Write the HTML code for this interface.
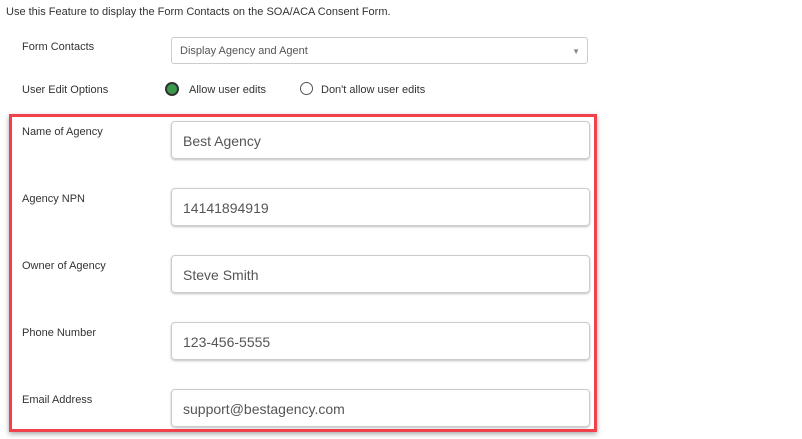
<!DOCTYPE html>
<html><head><style>
body{margin:0;width:802px;height:439px;background:#fff;font-family:"Liberation Sans",sans-serif;color:#333;position:relative;overflow:hidden}
.a{position:absolute;white-space:nowrap}
.lbl{font-size:11px;color:#333}
.inp{position:absolute;left:171px;border:1px solid #ccc;border-radius:4px;box-shadow:0 1px 2px rgba(0,0,0,.25);font-size:14px;color:#555;line-height:38px;padding-left:11px;box-sizing:border-box;width:419px;height:38px}
.box{position:absolute;left:9px;top:114px;width:588px;height:318px;border:3px solid #f0424a;box-sizing:border-box;box-shadow:0 2px 5px rgba(0,0,0,.35)}
</style></head><body>
<div class="a" style="left:6px;top:6px;font-size:11px;color:#333">Use this Feature to display the Form Contacts on the SOA/ACA Consent Form.</div>
<div class="a lbl" style="left:22px;top:41px">Form Contacts</div>
<div class="a" style="left:171px;top:37px;width:417px;height:27px;border:1px solid #ccc;border-radius:3px;box-sizing:border-box;font-size:11px;color:#555;line-height:27px;padding-left:8px">Display Agency and Agent<span style="position:absolute;right:7px;top:0;font-size:8px;color:#888">▼</span></div>
<div class="a lbl" style="left:22px;top:84px">User Edit Options</div>
<div class="a" style="left:165px;top:82px;width:10px;height:10px;border-radius:50%;background:#3a9a4a;border:2px solid #333"></div>
<div class="a lbl" style="left:189px;top:84px">Allow user edits</div>
<div class="a" style="left:300px;top:82px;width:11px;height:11px;border-radius:50%;border:1px solid #555"></div>
<div class="a lbl" style="left:321px;top:84px">Don't allow user edits</div>
<div class="box"></div>
<div class="a lbl" style="left:22px;top:126px">Name of Agency</div>
<div class="inp" style="top:121px">Best Agency</div>
<div class="a lbl" style="left:22px;top:193px">Agency NPN</div>
<div class="inp" style="top:188px">14141894919</div>
<div class="a lbl" style="left:22px;top:260px">Owner of Agency</div>
<div class="inp" style="top:255px">Steve Smith</div>
<div class="a lbl" style="left:22px;top:327px">Phone Number</div>
<div class="inp" style="top:322px">123-456-5555</div>
<div class="a lbl" style="left:22px;top:394px">Email Address</div>
<div class="inp" style="top:389px">support@bestagency.com</div>
</body></html>
